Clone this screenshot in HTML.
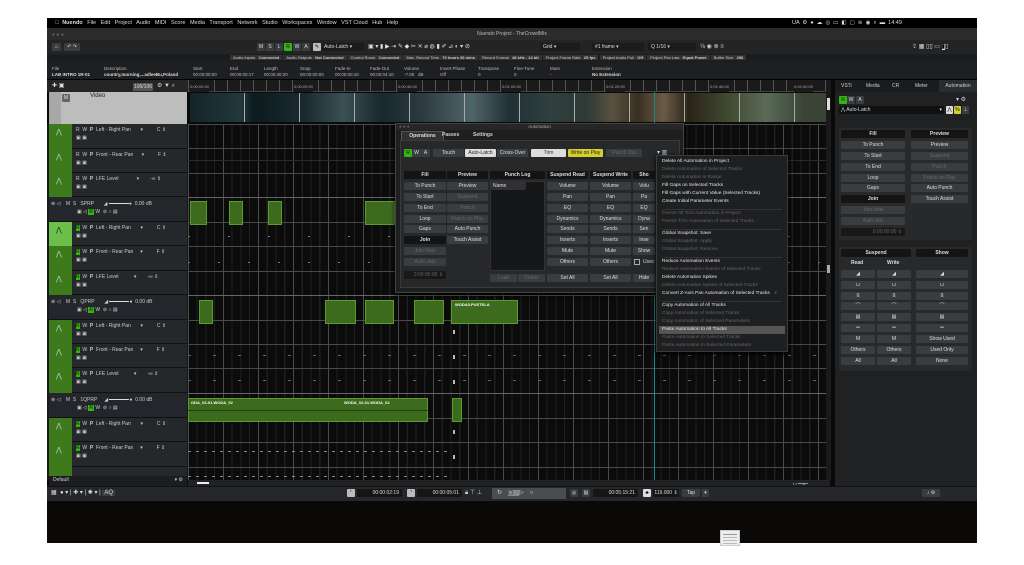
<!DOCTYPE html>
<html><head><meta charset="utf-8"><style>
*{margin:0;padding:0;box-sizing:border-box}
body{width:1024px;height:565px;background:#fff;position:relative;overflow:hidden;font-family:"Liberation Sans",sans-serif;font-size:5px;color:#cfcfcf}
.a{position:absolute}
.b{position:absolute;background:#3a3d40;color:#ddd;text-align:center;font-size:5px;line-height:8px;border-radius:1px}
.g{background:#34b512;color:#111}
.d{color:#666}
.hd{background:#141414;color:#ddd;font-weight:bold}
.clip{position:absolute;background:#3c6b1e;border:1px solid #5d9a2e}
.tl{position:absolute;left:0;width:100%;height:1px;background:#4a4a4a}
.mi{position:absolute;left:0;right:0;height:1px;background:#2d2d2d}
.tr{position:absolute;left:2px;width:136px;background:#25282a;border-bottom:1px solid #111}
.st{position:absolute;left:0;top:0;bottom:0;width:23px;background:#3d7a1c}
.ms{font-size:5px;color:#ccc}
</style></head><body>
<!-- app frame -->
<div class="a" style="left:47px;top:18px;width:930px;height:525px;background:#0b0808"></div>
<!-- menu bar -->
<div class="a" style="left:47px;top:18px;width:930px;height:10px;background:#000;color:#ddd;font-size:5.5px;line-height:10px;white-space:nowrap">
<span style="margin-left:8px">&#63743;</span>&nbsp;&nbsp;<b>Nuendo</b>&nbsp;&nbsp; File&nbsp;&nbsp; Edit&nbsp;&nbsp; Project&nbsp;&nbsp; Audio&nbsp;&nbsp; MIDI&nbsp;&nbsp; Score&nbsp;&nbsp; Media&nbsp;&nbsp; Transport&nbsp;&nbsp; Network&nbsp;&nbsp; Studio&nbsp;&nbsp; Workspaces&nbsp;&nbsp; Window&nbsp;&nbsp; VST Cloud&nbsp;&nbsp; Hub&nbsp;&nbsp; Help
<span class="a" style="left:745px;top:0">UA &nbsp;⚙ &nbsp;● &nbsp;☁ &nbsp;◎ &nbsp;▭ &nbsp;◧ &nbsp;▢ &nbsp;≋ &nbsp;◉ &nbsp;⌕ &nbsp;▬ &nbsp;14:49</span></div>
<!-- title bar -->
<div class="a" style="left:47px;top:28px;width:930px;height:12px;background:#2b2b2b;text-align:center;line-height:12px;color:#bbb">Nuendo Project - TheCrowdMix</div>
<div class="a" style="left:52px;top:32px;color:#666;font-size:5px">● ● ●</div>
<!-- toolbar -->
<div class="a" style="left:47px;top:40px;width:930px;height:14px;background:#222426"></div>
<div class="b" style="left:52px;top:43px;width:9px">⌂</div><div class="b" style="left:64px;top:43px;width:16px">↶ ↷</div>
<div class="b" style="left:257px;top:43px;width:8px">M</div><div class="b" style="left:266px;top:43px;width:8px">S</div><div class="b" style="left:275px;top:43px;width:8px">L</div><div class="b g" style="left:284px;top:43px;width:8px">R</div><div class="b" style="left:293px;top:43px;width:8px">W</div><div class="b" style="left:302px;top:43px;width:8px">A</div>
<div class="b" style="left:313px;top:43px;width:8px;background:#bbb;color:#000">✎</div>
<div class="b" style="left:322px;top:43px;width:42px;text-align:left;padding-left:2px;background:#1b1b1b">Auto-Latch ▾</div>
<div class="a" style="left:368px;top:43px;width:170px;height:8px;color:#ddd;font-size:6px;line-height:8px">▣ ▾ ▮ ▶ ⇥ ✎ ◆ ✂ ✕ ⌀ ◍ ▮ ✐ ⊿ ◐ ▾ ⊘</div>
<div class="b" style="left:540px;top:43px;width:40px;text-align:left;padding-left:3px;background:#1b1b1b">Grid ▾</div>
<div class="b" style="left:592px;top:43px;width:52px;text-align:left;padding-left:3px;background:#1b1b1b">#1 frame ▾</div>
<div class="b" style="left:648px;top:43px;width:48px;text-align:left;padding-left:3px;background:#1b1b1b">Q 1/16 ▾</div>
<div class="a" style="left:700px;top:43px;font-size:6px">⅛ ◉ ⊗ ≡</div>
<div class="a" style="left:912px;top:43px;font-size:6px;color:#ddd">⇪ ▦ ▯▯ ▭ <span style="background:#ddd;color:#000">▮</span>▯</div>
<!-- status line -->
<div class="a" style="left:47px;top:54px;width:930px;height:8px;background:#1c1d1f"></div>
<div class="a" style="left:230px;top:55px;white-space:nowrap;font-size:4px;line-height:6px">
<span style="background:#333;padding:0 3px">Audio Inputs &nbsp; <b>Connected</b></span> <span style="background:#333;padding:0 3px">Audio Outputs &nbsp; <b>Not Connected</b></span> <span style="background:#333;padding:0 3px">Control Room &nbsp; <b>Connected</b></span> <span style="background:#333;padding:0 3px">Max. Record Time &nbsp; <b>70 hours 35 mins</b></span> <span style="background:#333;padding:0 3px">Record Format &nbsp; <b>48 kHz - 24 bit</b></span> <span style="background:#333;padding:0 3px">Project Frame Rate &nbsp; <b>25 fps</b></span> <span style="background:#333;padding:0 3px">Project Audio Pull &nbsp; <b>Off</b></span> <span style="background:#333;padding:0 3px">Project Pan Law &nbsp; <b>Equal Power</b></span> <span style="background:#333;padding:0 3px">Buffer Size &nbsp; <b>256</b></span></div>
<!-- info line -->
<div class="a" style="left:47px;top:62px;width:930px;height:18px;background:#1e1f21;border-bottom:1px solid #000"></div>
<div class="a" style="left:52px;top:66px;font-size:4.5px;line-height:6px;white-space:nowrap;color:#bbb">
<span class="a" style="left:0">File<br><b style="color:#ddd">LAB INTRO 1R-01</b></span>
<span class="a" style="left:52px">Description<br><b style="color:#ddd">country,morning,...adleeBu,Poland</b></span>
<span class="a" style="left:141px">Start<br>00:00:00:00</span>
<span class="a" style="left:178px">End<br>00:00:00:17</span>
<span class="a" style="left:212px">Length<br>00:00:40:20</span>
<span class="a" style="left:248px">Snap<br>00:00:00:00</span>
<span class="a" style="left:283px">Fade-In<br>00:00:00:10</span>
<span class="a" style="left:318px">Fade-Out<br>00:00:04:10</span>
<span class="a" style="left:352px">Volume<br>-7.00 &nbsp; dB</span>
<span class="a" style="left:388px">Invert Phase<br>Off</span>
<span class="a" style="left:426px">Transpose<br>0</span>
<span class="a" style="left:462px">Fine-Tune<br>0</span>
<span class="a" style="left:498px">Mute<br>-</span>
<span class="a" style="left:540px">Extension<br><b style="color:#ddd">No Extension</b></span></div>
<!-- left header -->
<div class="a" style="left:47px;top:80px;width:141px;height:12px;background:#232527"></div>
<div class="a" style="left:52px;top:82px;font-size:6px;color:#ddd">✚ ▣</div>
<div class="b" style="left:133px;top:83px;width:20px;background:#555">106/106</div>
<div class="a" style="left:157px;top:82px;font-size:6px">⚙ ▼ ⌕</div>
<!-- video track header -->
<div class="a" style="left:49px;top:92px;width:138px;height:32px;background:#bdbdbd"></div>
<div class="a" style="left:49px;top:92px;width:12px;height:32px;background:#a8a8a8"></div>
<div class="b" style="left:62px;top:94px;width:8px;background:#666">M</div><div class="b" style="left:71px;top:94px;width:6px;background:#e38a00"></div>
<div class="a" style="left:90px;top:93px;color:#222;font-size:6px">Video</div>
<!-- ruler -->
<div class="a" style="left:188px;top:80px;width:642px;height:12px;background:#1a1a1a;border-bottom:1px solid #444;font-size:4px;color:#aaa;line-height:14px;white-space:nowrap;background-image:repeating-linear-gradient(90deg,#555 0 1px,transparent 1px 13px)">
<span class="a" style="left:2px;background:#1a1a1a">0:00:00:00</span><span class="a" style="left:106px;background:#1a1a1a">0:00:20:00</span><span class="a" style="left:210px;background:#1a1a1a">0:00:40:00</span><span class="a" style="left:314px;background:#1a1a1a">0:01:00:00</span><span class="a" style="left:418px;background:#1a1a1a">0:01:20:00</span><span class="a" style="left:522px;background:#1a1a1a">0:01:40:00</span><span class="a" style="left:606px;background:#1a1a1a">0:02:00:00</span></div>
<!-- video thumbs -->
<div class="a" style="left:188px;top:92px;width:642px;height:32px;background:#0a0a0a"></div>
<div class="a" style="left:190px;top:93px;width:640px;height:29px;background:linear-gradient(90deg,#142428 0,#22383c 8%,#0d1a1e 10%,#1a2b30 18%,#3a5055 24%,#18282c 30%,#2c3a40 36%,#50656a 44%,#203035 50%,#304040 56%,#2e3a36 62%,#5a5040 66%,#3a3020 70%,#6b5a48 74%,#2a2418 78%,#404a30 84%,#5a6a58 90%,#3a4434 96%)"></div>
<div class="a" style="left:190px;top:93px;width:640px;height:29px;background:repeating-linear-gradient(90deg,transparent 0 54px,#aaa 54px 55px)"></div>
<!-- timeline grid -->
<div class="a" style="left:188px;top:124px;width:642px;height:356px;background:#0b0b0b;background-image:repeating-linear-gradient(90deg,#4a4a4a 0 1px,transparent 1px 35px),repeating-linear-gradient(90deg,#1f1f1f 0 1px,transparent 1px 8.75px)"></div>
<div class="a" style="left:188px;top:124px;width:642px;height:356px">
<div class="tl" style="top:0"></div><div class="tl" style="top:24px"></div><div class="tl" style="top:49px"></div><div class="tl" style="top:73px;background:#666"></div><div class="tl" style="top:98px"></div><div class="tl" style="top:122px"></div><div class="tl" style="top:147px"></div><div class="tl" style="top:171px;background:#666"></div><div class="tl" style="top:196px"></div><div class="tl" style="top:220px"></div><div class="tl" style="top:244px"></div><div class="tl" style="top:269px;background:#666"></div><div class="tl" style="top:294px"></div><div class="tl" style="top:318px"></div><div class="tl" style="top:343px"></div>
<div class="mi" style="top:36px;background:#2b2b2b"></div>
</div>
<!-- automation point lines -->
<div class="a" style="left:188px;top:236px;width:642px;height:1px;background:repeating-linear-gradient(90deg,#777 0 2px,transparent 2px 40px)"></div>
<div class="a" style="left:188px;top:262px;width:642px;height:1px;background:repeating-linear-gradient(90deg,#777 0 2px,transparent 2px 30px)"></div>
<div class="a" style="left:188px;top:355px;width:642px;height:1px;background:repeating-linear-gradient(90deg,#666 0 3px,transparent 3px 25px)"></div>
<div class="a" style="left:188px;top:380px;width:642px;height:1px;background:repeating-linear-gradient(90deg,#666 0 3px,transparent 3px 25px)"></div>
<div class="a" style="left:188px;top:451px;width:260px;height:1px;background:repeating-linear-gradient(90deg,#888 0 3px,transparent 3px 8px)"></div>
<div class="a" style="left:188px;top:476px;width:260px;height:1px;background:repeating-linear-gradient(90deg,#888 0 3px,transparent 3px 8px)"></div>
<div class="a" style="left:453px;top:330px;width:2px;height:148px;background:repeating-linear-gradient(180deg,#bbb 0 4px,transparent 4px 25px)"></div>
<!-- clips -->
<div class="clip" style="left:190px;top:201px;width:17px;height:24px"></div>
<div class="clip" style="left:229px;top:201px;width:14px;height:24px"></div>
<div class="clip" style="left:268px;top:201px;width:14px;height:24px"></div>
<div class="clip" style="left:365px;top:201px;width:30px;height:24px"></div>
<div class="clip" style="left:199px;top:300px;width:14px;height:24px"></div>
<div class="clip" style="left:325px;top:300px;width:31px;height:24px"></div>
<div class="clip" style="left:365px;top:300px;width:29px;height:24px"></div>
<div class="clip" style="left:414px;top:300px;width:30px;height:24px"></div>
<div class="clip" style="left:451px;top:300px;width:67px;height:24px;color:#fff;font-weight:bold;font-size:4px;padding:1px 3px">WODA5.PUSTELA</div>
<div class="clip" style="left:188px;top:398px;width:240px;height:24px;color:#fff;font-weight:bold;font-size:4px;padding:1px 2px">ODA_02-01.WODA_02<span class="a" style="left:155px;top:1px">WODA_02-01.WODA_02</span></div>
<div class="clip" style="left:452px;top:398px;width:10px;height:24px"></div>
<div class="a" style="left:188px;top:410px;width:240px;height:1px;background:#234010"></div>
<div class="a" style="left:654px;top:92px;width:1px;height:388px;background:#1d8a8a"></div>
<!-- track headers -->
<div class="a" style="left:47px;top:124px;width:141px;height:356px;background:#17191a"></div>
<div class="a" style="left:49px;top:124px;width:23px;height:356px;background:#3d7a1c"></div>
<div class="a" style="left:49px;top:124px;width:138px;height:356px;font-size:5px;color:#ccc">
<!-- helper rows -->
<div class="tr" style="top:0;height:25px;left:23px;width:115px"><span class="a" style="left:4px;top:3px">R &nbsp;W &nbsp;<b>P</b> &nbsp;Left - Right Pan &nbsp; &nbsp; &nbsp; ▾ &nbsp; &nbsp; &nbsp; &nbsp; &nbsp;C ⇕</span><span class="a" style="left:4px;top:11px">▣ ▣</span></div>
<div class="tr" style="top:25px;height:24px;left:23px;width:115px"><span class="a" style="left:4px;top:3px">R &nbsp;W &nbsp;<b>P</b> &nbsp;Front - Rear Pan &nbsp; &nbsp; &nbsp;▾ &nbsp; &nbsp; &nbsp; &nbsp; &nbsp;F ⇕</span><span class="a" style="left:4px;top:11px">▣ ▣</span></div>
<div class="tr" style="top:49px;height:24px;left:23px;width:115px"><span class="a" style="left:4px;top:3px">R &nbsp;W &nbsp;<b>P</b> &nbsp;LFE Level &nbsp; &nbsp; &nbsp; &nbsp; &nbsp; &nbsp; ▾ &nbsp; &nbsp; &nbsp; &nbsp;-∞ ⇕</span><span class="a" style="left:4px;top:11px">▣ ▣</span></div>
<div class="tr" style="top:73px;height:25px;left:0;width:138px;background:#23262a"><span class="a" style="left:2px;top:4px">⊕ ◁ &nbsp; &nbsp;M &nbsp;S &nbsp; SPRP &nbsp; &nbsp; &nbsp; ◢ <span style="display:inline-block;width:20px;height:1px;background:#ddd;vertical-align:middle"></span>● &nbsp;0.00 dB</span><span class="a" style="left:28px;top:12px">▣ ◁ <span style="background:#34b512;color:#111;padding:0 1px">R</span> W &nbsp;⊘ ○ ▤</span></div>
<div class="tr" style="top:98px;height:24px;left:23px;width:115px"><span class="a" style="left:4px;top:3px"><span style="background:#34b512;color:#111">R</span> &nbsp;W &nbsp;<b>P</b> &nbsp;Left - Right Pan &nbsp; &nbsp; &nbsp; ▾ &nbsp; &nbsp; &nbsp; &nbsp; &nbsp;C ⇕</span><span class="a" style="left:4px;top:11px">▣ ▣</span></div>
<div class="tr" style="top:122px;height:25px;left:23px;width:115px"><span class="a" style="left:4px;top:3px"><span style="background:#34b512;color:#111">R</span> &nbsp;W &nbsp;<b>P</b> &nbsp;Front - Rear Pan &nbsp; &nbsp; ▾ &nbsp; &nbsp; &nbsp; &nbsp; &nbsp;F ⇕</span><span class="a" style="left:4px;top:11px">▣ ▣</span></div>
<div class="tr" style="top:147px;height:24px;left:23px;width:115px"><span class="a" style="left:4px;top:3px"><span style="background:#34b512;color:#111">R</span> &nbsp;W &nbsp;<b>P</b> &nbsp;LFE Level &nbsp; &nbsp; &nbsp; &nbsp; &nbsp; ▾ &nbsp; &nbsp; &nbsp; &nbsp;-∞ ⇕</span><span class="a" style="left:4px;top:11px">▣ ▣</span></div>
<div class="tr" style="top:171px;height:25px;left:0;width:138px;background:#23262a"><span class="a" style="left:2px;top:4px">⊕ ◁ &nbsp; &nbsp;M &nbsp;S &nbsp; QPRP &nbsp; &nbsp; &nbsp; ◢ <span style="display:inline-block;width:20px;height:1px;background:#ddd;vertical-align:middle"></span>● &nbsp;0.00 dB</span><span class="a" style="left:28px;top:12px">▣ ◁ <span style="background:#34b512;color:#111;padding:0 1px">R</span> W &nbsp;⊘ ○ ▤</span></div>
<div class="tr" style="top:196px;height:24px;left:23px;width:115px"><span class="a" style="left:4px;top:3px"><span style="background:#34b512;color:#111">R</span> &nbsp;W &nbsp;<b>P</b> &nbsp;Left - Right Pan &nbsp; &nbsp; &nbsp; ▾ &nbsp; &nbsp; &nbsp; &nbsp; &nbsp;C ⇕</span><span class="a" style="left:4px;top:11px">▣ ▣</span></div>
<div class="tr" style="top:220px;height:24px;left:23px;width:115px"><span class="a" style="left:4px;top:3px"><span style="background:#34b512;color:#111">R</span> &nbsp;W &nbsp;<b>P</b> &nbsp;Front - Rear Pan &nbsp; &nbsp; ▾ &nbsp; &nbsp; &nbsp; &nbsp; &nbsp;F ⇕</span><span class="a" style="left:4px;top:11px">▣ ▣</span></div>
<div class="tr" style="top:244px;height:25px;left:23px;width:115px"><span class="a" style="left:4px;top:3px"><span style="background:#34b512;color:#111">R</span> &nbsp;W &nbsp;<b>P</b> &nbsp;LFE Level &nbsp; &nbsp; &nbsp; &nbsp; &nbsp; ▾ &nbsp; &nbsp; &nbsp; &nbsp;-∞ ⇕</span><span class="a" style="left:4px;top:11px">▣ ▣</span></div>
<div class="tr" style="top:269px;height:25px;left:0;width:138px;background:#23262a"><span class="a" style="left:2px;top:4px">⊕ ◁ &nbsp; &nbsp;M &nbsp;S &nbsp; 1QPRP &nbsp; &nbsp; ◢ <span style="display:inline-block;width:20px;height:1px;background:#ddd;vertical-align:middle"></span>● &nbsp;0.00 dB</span><span class="a" style="left:28px;top:12px">▣ ◁ <span style="background:#34b512;color:#111;padding:0 1px">R</span> W &nbsp;⊘ ○ ▤</span></div>
<div class="tr" style="top:294px;height:24px;left:23px;width:115px"><span class="a" style="left:4px;top:3px"><span style="background:#34b512;color:#111">R</span> &nbsp;W &nbsp;<b>P</b> &nbsp;Left - Right Pan &nbsp; &nbsp; &nbsp; ▾ &nbsp; &nbsp; &nbsp; &nbsp; &nbsp;C ⇕</span><span class="a" style="left:4px;top:11px">▣ ▣</span></div>
<div class="tr" style="top:318px;height:25px;left:23px;width:115px"><span class="a" style="left:4px;top:3px"><span style="background:#34b512;color:#111">R</span> &nbsp;W &nbsp;<b>P</b> &nbsp;Front - Rear Pan &nbsp; &nbsp; ▾ &nbsp; &nbsp; &nbsp; &nbsp; &nbsp;F ⇕</span><span class="a" style="left:4px;top:11px">▣ ▣</span></div>
<div class="tr" style="top:343px;height:13px;left:23px;width:115px"></div>
<span class="a" style="left:7px;top:4px;font-size:7px">⋀</span><span class="a" style="left:7px;top:29px;font-size:7px">⋀</span><span class="a" style="left:7px;top:53px;font-size:7px">⋀</span>
<div class="a" style="left:0;top:98px;width:23px;height:24px;background:#6cc04a"></div>
<span class="a" style="left:7px;top:102px;font-size:7px;color:#222">⋀</span><span class="a" style="left:7px;top:126px;font-size:7px">⋀</span><span class="a" style="left:7px;top:151px;font-size:7px">⋀</span>
<span class="a" style="left:7px;top:200px;font-size:7px">⋀</span><span class="a" style="left:7px;top:224px;font-size:7px">⋀</span><span class="a" style="left:7px;top:248px;font-size:7px">⋀</span>
<span class="a" style="left:7px;top:298px;font-size:7px">⋀</span><span class="a" style="left:7px;top:322px;font-size:7px">⋀</span>
</div>
<div class="a" style="left:49px;top:476px;width:138px;height:10px;background:#1c1d1f;font-size:5px;padding:1px 4px">Default<span style="float:right">▾ ⚙</span></div>
<!-- bottom scroll -->
<div class="a" style="left:188px;top:480px;width:642px;height:6px;background:#202224"></div>
<div class="a" style="left:197px;top:482px;width:12px;height:2px;background:#eee"></div>
<div class="a" style="left:793px;top:481px;width:30px;height:4px;font-size:4px">▪ ▪ ━━●━</div>
<!-- transport -->
<div class="a" style="left:47px;top:486px;width:930px;height:15px;background:#25272a;border-top:1px solid #111"></div>
<div class="a" style="left:51px;top:489px;font-size:6px;color:#ddd;white-space:nowrap">▦ &nbsp;● ▾ | ✚ ▾ | ✺ ▾ | <span style="background:#3a3d40;padding:0 2px">AQ</span></div>
<div class="b" style="left:347px;top:489px;width:8px;background:#bbb;color:#000">⌜</div>
<div class="b" style="left:357px;top:489px;width:45px;background:#151515;text-align:right;padding-right:3px">00:00:02:19</div>
<div class="b" style="left:407px;top:489px;width:8px;background:#bbb;color:#000">⌝</div>
<div class="b" style="left:417px;top:489px;width:45px;background:#151515;text-align:right;padding-right:3px">00:00:05:01</div>
<div class="a" style="left:465px;top:489px;font-size:6px">🔒︎ ⊤ ⊥</div>
<div class="a" style="left:492px;top:488px;width:74px;height:11px;background:#4a4d50;font-size:6px;color:#ddd;line-height:11px;letter-spacing:6px;padding-left:5px">↻<span style="background:#888;color:#000">◻</span>▷○</div>
<div class="b" style="left:570px;top:489px;width:8px">◎</div><div class="b" style="left:582px;top:489px;width:8px">▤</div>
<div class="b" style="left:593px;top:489px;width:45px;background:#151515;text-align:right;padding-right:3px">00:05:15:21</div>
<div class="b" style="left:643px;top:489px;width:8px;background:#ddd;color:#000">♣</div>
<div class="b" style="left:653px;top:489px;width:26px;background:#151515">119.000 ⇕</div>
<div class="b" style="left:682px;top:489px;width:18px">Tap</div><div class="b" style="left:702px;top:489px;width:7px">▾</div>
<div class="b" style="left:922px;top:489px;width:18px">♪ ⚙</div><div class="b" style="left:942px;top:489px;width:30px;background:#151515"></div>
<!-- doc icon -->
<div class="a" style="left:720px;top:530px;width:20px;height:16px;background:#eee;border:1px solid #ccc"></div>
<div class="a" style="left:723px;top:534px;width:14px;height:1px;background:#999;box-shadow:0 3px #bbb,0 6px #bbb,0 9px #bbb"></div>
<!-- right panel -->
<div class="a" style="left:833px;top:80px;width:144px;height:406px;background:#1f2123;border-left:2px solid #0a0a0a"></div>
<div class="a" style="left:835px;top:80px;width:142px;height:12px;background:#1a1b1d;font-size:5px;line-height:12px;white-space:nowrap"><span class="a" style="left:6px">VSTi</span><span class="a" style="left:31px">Media</span><span class="a" style="left:57px">CR</span><span class="a" style="left:80px">Meter</span><span class="a" style="left:104px;width:38px;text-align:center;background:#2a2c2f">Automation</span></div>
<div class="b g" style="left:839px;top:96px;width:8px">R</div><div class="b" style="left:847px;top:96px;width:8px">W</div><div class="b" style="left:856px;top:96px;width:8px">A</div>
<div class="a" style="left:956px;top:96px;font-size:6px">▾ ⚙</div>
<div class="b" style="left:839px;top:106px;width:105px;background:#111;text-align:left;padding-left:2px">⋀ Auto-Latch<span style="float:right;padding-right:2px">▾</span></div>
<div class="b" style="left:946px;top:106px;width:7px;background:#ddd;color:#000">⋀</div><div class="b" style="left:954px;top:106px;width:7px;background:#d5cf2a;color:#000">%</div><div class="b" style="left:962px;top:106px;width:7px">⊥</div>
<!-- fill/preview -->
<div class="a" style="left:839px;top:128px;width:133px;height:112px;background:#27292b"></div>
<div class="b hd" style="left:841px;top:130px;width:64px">Fill</div><div class="b hd" style="left:911px;top:130px;width:57px">Preview</div>
<div class="b" style="left:841px;top:141px;width:64px">To Punch</div><div class="b" style="left:911px;top:141px;width:57px">Preview</div>
<div class="b" style="left:841px;top:152px;width:64px">To Start</div><div class="b d" style="left:911px;top:152px;width:57px">Suspend</div>
<div class="b" style="left:841px;top:163px;width:64px">To End</div><div class="b d" style="left:911px;top:163px;width:57px">Punch</div>
<div class="b" style="left:841px;top:174px;width:64px">Loop</div><div class="b d" style="left:911px;top:174px;width:57px">Punch on Play</div>
<div class="b" style="left:841px;top:184px;width:64px">Gaps</div><div class="b" style="left:911px;top:184px;width:57px">Auto Punch</div>
<div class="b hd" style="left:841px;top:195px;width:64px">Join</div><div class="b" style="left:911px;top:195px;width:57px">Touch Assist</div>
<div class="b d" style="left:841px;top:206px;width:64px">Join Now</div>
<div class="b d" style="left:841px;top:217px;width:64px">Auto Join</div>
<div class="b d" style="left:841px;top:228px;width:64px;background:#181818;text-align:right;padding-right:3px">0:00:00:00 ⇕</div>
<!-- suspend/show -->
<div class="a" style="left:839px;top:247px;width:133px;height:124px;background:#27292b"></div>
<div class="b hd" style="left:841px;top:249px;width:70px">Suspend</div><div class="b hd" style="left:916px;top:249px;width:52px">Show</div>
<div class="a" style="left:851px;top:260px;font-weight:bold;color:#ddd">Read</div><div class="a" style="left:887px;top:260px;font-weight:bold;color:#ddd">Write</div>
<div class="b" style="left:841px;top:270px;width:34px">◢</div><div class="b" style="left:877px;top:270px;width:34px">◢</div><div class="b" style="left:916px;top:270px;width:52px">◢</div>
<div class="b" style="left:841px;top:281px;width:34px">⊔</div><div class="b" style="left:877px;top:281px;width:34px">⊔</div><div class="b" style="left:916px;top:281px;width:52px">⊔</div>
<div class="b" style="left:841px;top:292px;width:34px">ß</div><div class="b" style="left:877px;top:292px;width:34px">ß</div><div class="b" style="left:916px;top:292px;width:52px">ß</div>
<div class="b" style="left:841px;top:302px;width:34px">⌒</div><div class="b" style="left:877px;top:302px;width:34px">⌒</div><div class="b" style="left:916px;top:302px;width:52px">⌒</div>
<div class="b" style="left:841px;top:313px;width:34px">▤</div><div class="b" style="left:877px;top:313px;width:34px">▤</div><div class="b" style="left:916px;top:313px;width:52px">▤</div>
<div class="b" style="left:841px;top:324px;width:34px">═</div><div class="b" style="left:877px;top:324px;width:34px">═</div><div class="b" style="left:916px;top:324px;width:52px">═</div>
<div class="b" style="left:841px;top:335px;width:34px">M</div><div class="b" style="left:877px;top:335px;width:34px">M</div><div class="b" style="left:916px;top:335px;width:52px">Show Used</div>
<div class="b" style="left:841px;top:346px;width:34px">Others</div><div class="b" style="left:877px;top:346px;width:34px">Others</div><div class="b" style="left:916px;top:346px;width:52px">Used Only</div>
<div class="b" style="left:841px;top:357px;width:34px">All</div><div class="b" style="left:877px;top:357px;width:34px">All</div><div class="b" style="left:916px;top:357px;width:52px">None</div>
<!-- scrollbar right of timeline -->
<div class="a" style="left:826px;top:80px;width:5px;height:400px;background:#1a1a1a"></div>
<div class="a" style="left:827px;top:98px;width:3px;height:12px;background:#ddd"></div>
<div class="a" style="left:827px;top:265px;width:3px;height:8px;background:#aaa"></div>
<!-- automation dialog -->
<div class="a" style="left:395px;top:123px;width:289px;height:170px;background:#1d1f21;border:1px solid #444;box-shadow:0 2px 4px #000"></div>
<div class="a" style="left:396px;top:124px;width:287px;height:6px;background:#262626;text-align:center;font-size:4.5px;line-height:6px;color:#aaa">Automation<span class="a" style="left:3px;color:#666">● ● ●</span></div>
<div class="a" style="left:401px;top:131px;width:43px;height:9px;background:#303234;border:1px solid #555;border-bottom:none;text-align:center;line-height:8px;font-weight:bold;color:#ddd">Operations</div>
<div class="a" style="left:442px;top:132px;font-weight:bold">Passes</div><div class="a" style="left:473px;top:132px;font-weight:bold">Settings</div>
<div class="a" style="left:400px;top:140px;width:280px;height:148px;background:#26282a;border:1px solid #3a3a3a"></div>
<div class="b g" style="left:404px;top:149px;width:8px">R</div><div class="b" style="left:412px;top:149px;width:9px">W</div><div class="b" style="left:421px;top:149px;width:9px">A</div>
<div class="b" style="left:433px;top:149px;width:31px">Touch</div><div class="b" style="left:465px;top:149px;width:31px;background:#ddd;color:#222">Auto-Latch</div><div class="b" style="left:497px;top:149px;width:31px">Cross-Over</div>
<div class="b" style="left:531px;top:149px;width:35px;background:#ddd;color:#333">Trim</div>
<div class="b" style="left:568px;top:149px;width:35px;background:#d5cf2a;color:#222">Write on Play</div>
<div class="b d" style="left:606px;top:149px;width:36px">Punch Out</div>
<div class="a" style="left:657px;top:149px;font-size:6px">▾ ▥</div>
<div class="b hd" style="left:404px;top:171px;width:42px">Fill</div><div class="b hd" style="left:447px;top:171px;width:41px">Preview</div><div class="b hd" style="left:490px;top:171px;width:55px">Punch Log</div><div class="b hd" style="left:547px;top:171px;width:41px">Suspend Read</div><div class="b hd" style="left:590px;top:171px;width:41px">Suspend Write</div><div class="b hd" style="left:633px;top:171px;width:22px">Sho</div>
<div class="a" style="left:490px;top:181px;width:55px;height:90px;background:#161718;border:1px solid #333"></div>
<div class="b" style="left:491px;top:182px;width:35px;background:#2f3134;text-align:left;padding-left:2px">Name</div><div class="b" style="left:527px;top:182px;width:17px;background:#2f3134"></div>
<div class="b" style="left:404px;top:182px;width:42px">To Punch</div><div class="b" style="left:447px;top:182px;width:41px">Preview</div><div class="b" style="left:547px;top:182px;width:41px">Volume</div><div class="b" style="left:590px;top:182px;width:41px">Volume</div><div class="b" style="left:633px;top:182px;width:22px">Volu</div>
<div class="b" style="left:404px;top:193px;width:42px">To Start</div><div class="b d" style="left:447px;top:193px;width:41px">Suspend</div><div class="b" style="left:547px;top:193px;width:41px">Pan</div><div class="b" style="left:590px;top:193px;width:41px">Pan</div><div class="b" style="left:633px;top:193px;width:22px">Pa</div>
<div class="b" style="left:404px;top:204px;width:42px">To End</div><div class="b d" style="left:447px;top:204px;width:41px">Punch</div><div class="b" style="left:547px;top:204px;width:41px">EQ</div><div class="b" style="left:590px;top:204px;width:41px">EQ</div><div class="b" style="left:633px;top:204px;width:22px">EQ</div>
<div class="b" style="left:404px;top:215px;width:42px">Loop</div><div class="b d" style="left:447px;top:215px;width:41px">Punch on Play</div><div class="b" style="left:547px;top:215px;width:41px">Dynamics</div><div class="b" style="left:590px;top:215px;width:41px">Dynamics</div><div class="b" style="left:633px;top:215px;width:22px">Dyna</div>
<div class="b" style="left:404px;top:225px;width:42px">Gaps</div><div class="b" style="left:447px;top:225px;width:41px">Auto Punch</div><div class="b" style="left:547px;top:225px;width:41px">Sends</div><div class="b" style="left:590px;top:225px;width:41px">Sends</div><div class="b" style="left:633px;top:225px;width:22px">Sen</div>
<div class="b hd" style="left:404px;top:236px;width:42px">Join</div><div class="b" style="left:447px;top:236px;width:41px">Touch Assist</div><div class="b" style="left:547px;top:236px;width:41px">Inserts</div><div class="b" style="left:590px;top:236px;width:41px">Inserts</div><div class="b" style="left:633px;top:236px;width:22px">Inse</div>
<div class="b d" style="left:404px;top:247px;width:42px">Join Now</div><div class="b" style="left:547px;top:247px;width:41px">Mute</div><div class="b" style="left:590px;top:247px;width:41px">Mute</div><div class="b" style="left:633px;top:247px;width:22px">Show</div>
<div class="b d" style="left:404px;top:258px;width:42px">Auto Join</div><div class="b" style="left:547px;top:258px;width:41px">Others</div><div class="b" style="left:590px;top:258px;width:41px">Others</div><div class="a" style="left:634px;top:259px;width:6px;height:6px;border:1px solid #aaa"></div><div class="a" style="left:643px;top:259px">Usec</div>
<div class="b d" style="left:404px;top:271px;width:42px;background:#181818;text-align:right;padding-right:3px">0:00:00:00 ⇕</div>
<div class="b d" style="left:490px;top:274px;width:27px">Load</div><div class="b d" style="left:518px;top:274px;width:27px">Delete</div><div class="b" style="left:547px;top:274px;width:41px">Set All</div><div class="b" style="left:590px;top:274px;width:41px">Set All</div><div class="b" style="left:633px;top:274px;width:22px">Hide</div>
<!-- context menu -->
<div class="a" style="left:656px;top:155px;width:132px;height:197px;background:#1e1f21;border:1px solid #3a3a3a;box-shadow:0 2px 5px #000;font-size:4.8px;line-height:8px;color:#e5e5e5;padding:2px 0 0 5px;white-space:nowrap">
<div>Delete All Automation in Project</div><div class="d">Delete Automation of Selected Tracks</div><div class="d">Delete Automation in Range</div><div>Fill Gaps on Selected Tracks</div><div>Fill Gaps with Current Value (Selected Tracks)</div><div>Create Initial Parameter Events</div>
<div style="height:4px;border-bottom:1px solid #333;margin-right:5px;margin-bottom:0"></div>
<div class="d">Freeze All Trim Automation in Project</div><div class="d">Freeze Trim Automation of Selected Tracks</div>
<div style="height:4px;border-bottom:1px solid #333;margin-right:5px"></div>
<div>Global Snapshot: Save</div><div class="d">Global Snapshot: Apply</div><div class="d">Global Snapshot: Remove</div>
<div style="height:4px;border-bottom:1px solid #333;margin-right:5px"></div>
<div>Reduce Automation Events</div><div class="d">Reduce Automation Events of Selected Tracks</div><div>Delete Automation Spikes</div><div class="d">Delete Automation Spikes of Selected Tracks</div><div>Convert Z-Axis Pan Automation of Selected Tracks &nbsp; &nbsp;›</div>
<div style="height:4px;border-bottom:1px solid #333;margin-right:5px"></div>
<div>Copy Automation of All Tracks</div><div class="d">Copy Automation of Selected Tracks</div><div class="d">Copy Automation of Selected Parameters</div>
<div style="background:#555;margin-left:-3px;padding-left:3px;margin-right:2px">Paste Automation to All Tracks</div><div class="d">Paste Automation to Selected Tracks</div><div class="d">Paste Automation to Selected Parameters</div>
</div>
</body></html>
